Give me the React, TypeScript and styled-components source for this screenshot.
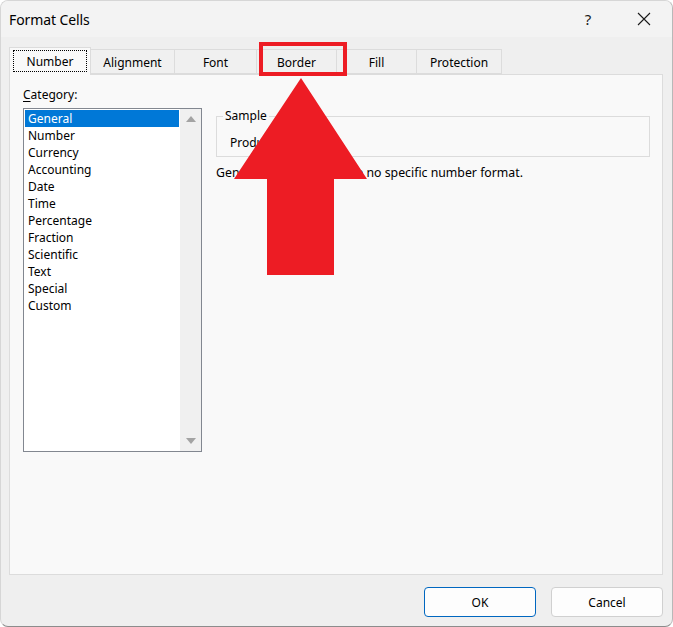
import React from "react";
import styled, { createGlobalStyle } from "styled-components";

const Global = createGlobalStyle`
  html, body { margin: 0; padding: 0; background: #ffffff; }
  * { box-sizing: border-box; }
`;

const FONT = `"Segoe UI", "Noto Sans", "Open Sans", sans-serif`;

const Window = styled.div`
  position: relative;
  width: 673px;
  height: 627px;
  display: flex;
  flex-direction: column;
  background: #efefef;
  border: 1px solid #d6d6d6;
  border-bottom-color: #8c8c8c;
  border-right-color: #b8b8b8;
  border-radius: 8px;
  overflow: hidden;
  font-family: ${FONT};
  color: #000;
`;

const TitleBar = styled.div`
  height: 36px;
  flex: none;
  display: flex;
  align-items: center;
  background: #f3f3f3;
  padding-left: 8px;
`;

const Title = styled.div`
  font-size: 14px;
  flex: 1;
  letter-spacing: -0.1px;
`;

const TitleButton = styled.div`
  width: 56px;
  height: 36px;
  display: flex;
  align-items: center;
  justify-content: center;
  font-size: 15px;
  color: #1a1a1a;
`;

const Body = styled.div`
  flex: 1;
  display: flex;
  flex-direction: column;
  padding: 11px 9px 0 8px;
`;

const TabStrip = styled.div`
  display: flex;
  align-items: flex-end;
  height: 26px;
  position: relative;
  z-index: 1;
`;

const Tab = styled.div<{ $w: number; $active?: boolean }>`
  width: ${(p) => p.$w}px;
  height: ${(p) => (p.$active ? 28 : 25)}px;
  margin-bottom: ${(p) => (p.$active ? -1 : 0)}px;
  margin-left: -1px;
  &:first-child { margin-left: 0; }
  border: 1px solid #dcdcdc;
  border-bottom: ${(p) => (p.$active ? "none" : "1px solid #dcdcdc")};
  background: ${(p) => (p.$active ? "#f9f9f9" : "#f0f0f0")};
  display: flex;
  align-items: ${(p) => (p.$active ? "flex-start" : "center")};
  justify-content: center;
  font-size: 12px;
  padding-top: ${(p) => (p.$active ? 2 : 1)}px;
  position: relative;
  z-index: ${(p) => (p.$active ? 2 : 1)};
`;

const Focus = styled.span`
  display: flex;
  align-items: center;
  justify-content: center;
  width: 74px;
  height: 22px;
  padding-top: 1px;
  border: 1px dotted #000;
`;

const Panel = styled.div`
  height: 501px;
  background: #f9f9f9;
  border: 1px solid #dcdcdc;
  display: grid;
  grid-template-columns: 179px 1fr;
  column-gap: 14px;
  padding: 11px 12px 0 13px;
`;

const LeftCol = styled.div`
  display: flex;
  flex-direction: column;
`;

const Label = styled.div`
  font-size: 12px;
  line-height: 17px;
  height: 17px;
  margin-bottom: 5px;
  u { text-decoration: underline; text-underline-offset: 2px; }
`;

const ListBox = styled.div`
  height: 344px;
  border: 1px solid #828790;
  background: #ffffff;
  display: flex;
`;

const List = styled.div`
  flex: 1;
  padding: 1px 1px 0 1px;
`;

const Item = styled.div<{ $selected?: boolean }>`
  height: 17px;
  line-height: 17px;
  font-size: 12px;
  padding-left: 3px;
  background: ${(p) => (p.$selected ? "#0078d7" : "transparent")};
  color: ${(p) => (p.$selected ? "#ffffff" : "#000000")};
`;

const ScrollBar = styled.div`
  width: 21px;
  background: #f0f0f0;
  display: flex;
  flex-direction: column;
  justify-content: space-between;
  align-items: center;
  padding: 7px 0 7px;
`;

const RightCol = styled.div`
  padding-top: 22px;
  display: flex;
  flex-direction: column;
`;

const Group = styled.fieldset`
  margin: 0;
  border: 1px solid #dcdcdc;
  padding: 0 0 5px 6px;
`;

const Legend = styled.legend`
  font-size: 12px;
  line-height: 16px;
  padding: 0 2px;
  margin-left: 0;
`;

const SampleText = styled.div`
  font-size: 12px;
  line-height: 17px;
  margin-top: 10px;
  padding-left: 7px;
`;

const Description = styled.div`
  font-size: 12.3px;
  line-height: 17px;
  margin-top: 7px;
`;

const Footer = styled.div`
  flex: 1;
  display: flex;
  justify-content: flex-end;
  align-items: flex-start;
  gap: 15px;
  padding-top: 12px;
`;

const Button = styled.div<{ $primary?: boolean }>`
  width: 112px;
  height: 30px;
  display: flex;
  align-items: center;
  justify-content: center;
  font-size: 12px;
  background: #fdfdfd;
  border: 1px solid ${(p) => (p.$primary ? "#0067c0" : "#d0d0d0")};
  border-radius: 4px;
`;

const Highlight = styled.div`
  position: absolute;
  left: 258px;
  top: 41px;
  width: 88px;
  height: 34px;
  border: 4px solid #ed1c24;
  z-index: 5;
`;

const ArrowSvg = styled.svg`
  position: absolute;
  left: 232px;
  top: 76px;
  z-index: 5;
`;

const categories = [
  "General",
  "Number",
  "Currency",
  "Accounting",
  "Date",
  "Time",
  "Percentage",
  "Fraction",
  "Scientific",
  "Text",
  "Special",
  "Custom",
];

const tabs: { label: string; w: number }[] = [
  { label: "Number", w: 82 },
  { label: "Alignment", w: 85 },
  { label: "Font", w: 83 },
  { label: "Border", w: 81 },
  { label: "Fill", w: 81 },
  { label: "Protection", w: 86 },
];

export default function App() {
  return (
    <>
      <Global />
      <Window>
        <TitleBar>
          <Title>Format Cells</Title>
          <TitleButton>?</TitleButton>
          <TitleButton>
            <svg width="14" height="14" viewBox="0 0 14 14">
              <path d="M1 1 L13 13 M13 1 L1 13" stroke="#1a1a1a" strokeWidth="1.1" />
            </svg>
          </TitleButton>
        </TitleBar>
        <Body>
          <TabStrip>
            {tabs.map((t, i) =>
              i === 0 ? (
                <Tab key={t.label} $w={t.w} $active>
                  <Focus>{t.label}</Focus>
                </Tab>
              ) : (
                <Tab key={t.label} $w={t.w}>
                  {t.label}
                </Tab>
              )
            )}
          </TabStrip>
          <Panel>
            <LeftCol>
              <Label>
                <u>C</u>ategory:
              </Label>
              <ListBox>
                <List>
                  {categories.map((c, i) => (
                    <Item key={c} $selected={i === 0}>
                      {c}
                    </Item>
                  ))}
                </List>
                <ScrollBar>
                  <svg width="10" height="6" viewBox="0 0 10 6">
                    <path d="M0 6 L5 0 L10 6 Z" fill="#a3a3a3" />
                  </svg>
                  <svg width="10" height="6" viewBox="0 0 10 6">
                    <path d="M0 0 L10 0 L5 6 Z" fill="#a3a3a3" />
                  </svg>
                </ScrollBar>
              </ListBox>
            </LeftCol>
            <RightCol>
              <Group>
                <Legend>Sample</Legend>
                <SampleText>Product</SampleText>
              </Group>
              <Description>General format cells have no specific number format.</Description>
            </RightCol>
          </Panel>
          <Footer>
            <Button $primary>OK</Button>
            <Button>Cancel</Button>
          </Footer>
        </Body>
        <Highlight />
        <ArrowSvg width="136" height="200" viewBox="0 0 136 200">
          <path d="M68 1 L134 102 L101 102 L101 198 L34 198 L34 102 L1 102 Z" fill="#ed1c24" />
        </ArrowSvg>
      </Window>
    </>
  );
}
